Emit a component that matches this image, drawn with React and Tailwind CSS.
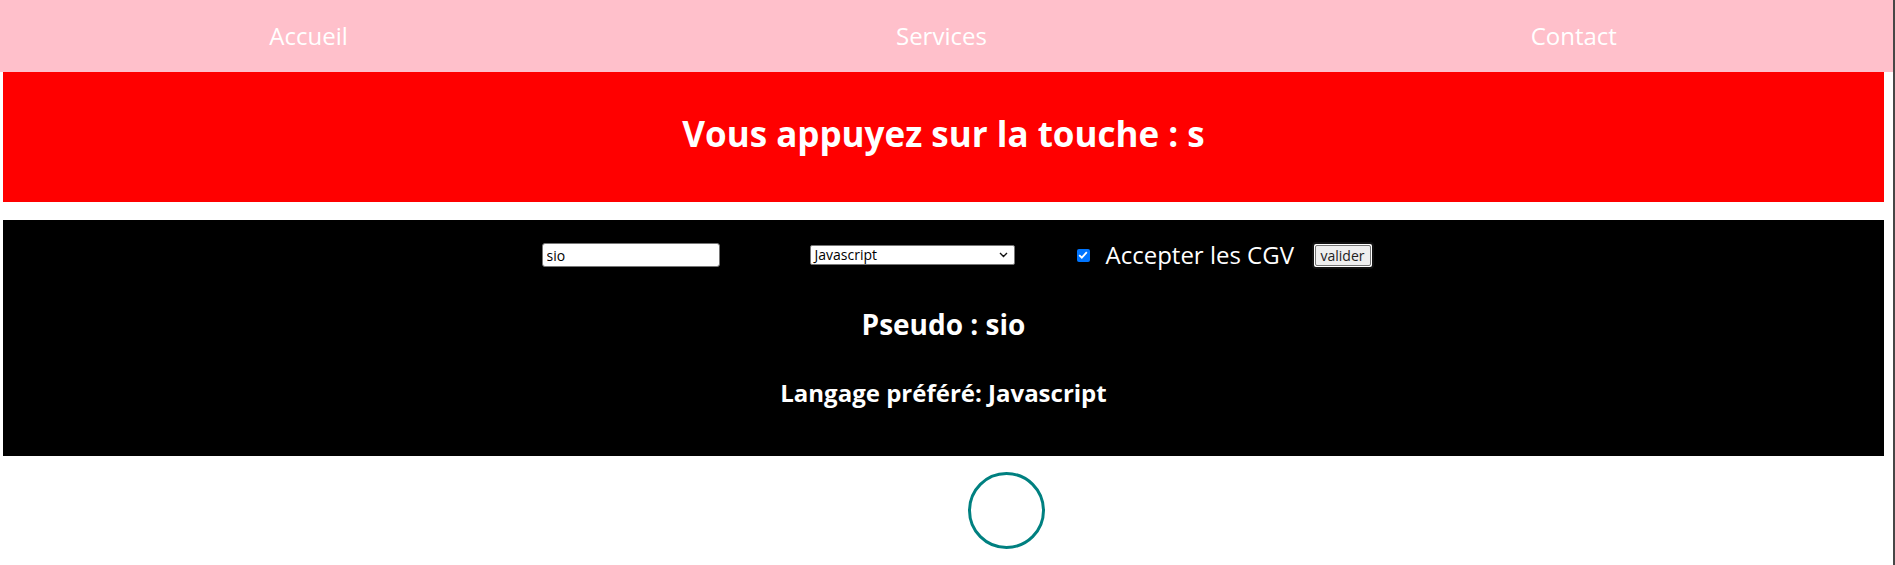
import React from "react";

export default function App() {
  return (
    <div className="flex h-[565px] w-[1895px] overflow-hidden bg-white font-['Open_Sans','Noto_Sans',sans-serif]">
      <div className="w-[1893px]">
        <nav className="flex h-[72px] items-center justify-around bg-[#ffc0cb] text-[24px] leading-[32px] text-white">
          <a className="-ml-[7px] block w-[74px] whitespace-nowrap text-center">Accueil</a>
          <a className="block w-[82px] whitespace-nowrap text-center">Services</a>
          <a className="block w-[86px] whitespace-nowrap text-center">Contact</a>
        </nav>

        <div className="ml-[3px] flex h-[130px] w-[1881px] items-center justify-center bg-[#ff0000] pb-[6px]">
          <h1 className="text-[35px] font-bold leading-[44px] text-white">
            Vous appuyez sur la touche : s
          </h1>
        </div>

        <div className="ml-[3px] mt-[18px] h-[236px] w-[1881px] bg-black pt-[21px] text-white">
          <div className="flex h-[28px] items-center justify-center pl-[28px]">
            <input
              readOnly
              value="sio"
              className="mr-[90px] h-[24px] w-[178px] rounded-[3px] border border-[#767676] bg-white px-[4px] text-[14px] text-black outline-none"
            />
            <div className="relative mr-[62px] flex h-[20px] w-[205px] items-center rounded-[2px] border border-[#767676] bg-white pl-[4px] text-[14px] leading-[18px] text-black">
              <span>Javascript</span>
              <svg
                className="absolute right-[6px] top-[6px]"
                width="9"
                height="6"
                viewBox="0 0 9 6"
                fill="none"
              >
                <path d="M1 1l3.5 3.5L8 1" stroke="#111" strokeWidth="1.4" />
              </svg>
            </div>
            <span className="mr-[16px] flex h-[13px] w-[13px] items-center justify-center rounded-[2px] bg-[#0075ff]">
              <svg width="10" height="8" viewBox="0 0 10 8" fill="none">
                <path d="M1.2 4.2l2.6 2.5L8.8 1.2" stroke="#fff" strokeWidth="1.8" />
              </svg>
            </span>
            <label className="mr-[20px] w-[186px] whitespace-nowrap text-[24px] leading-[28px]">
              Accepter les CGV
            </label>
            <span className="flex h-[27px] w-[62px] rounded-[4px] border-2 border-[#101010] bg-white p-[1px]">
              <span className="flex flex-1 items-center justify-center rounded-[2px] border border-[#767676] bg-[#efefef] text-[14px] text-[#222]">
                valider
              </span>
            </span>
          </div>

          <h2 className="mt-[39px] text-center text-[28px] font-bold leading-[32px]">
            Pseudo : sio
          </h2>
          <h3 className="mt-[39px] text-center text-[24px] font-bold leading-[28px]">
            Langage préféré: Javascript
          </h3>
        </div>

        <div className="mt-[16px] flex justify-center pl-[120px]">
          <div className="h-[77px] w-[77px] rounded-full border-[3px] border-[#008080]" />
        </div>
      </div>
      <div className="w-[2px] bg-[#474747]" />
    </div>
  );
}
